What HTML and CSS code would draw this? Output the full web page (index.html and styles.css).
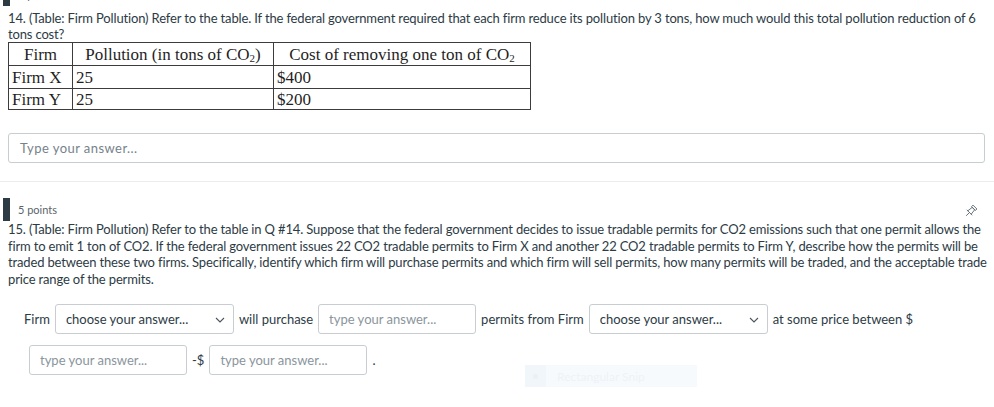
FILE: index.html
```html
<!DOCTYPE html>
<html>
<head>
<meta charset="utf-8">
<link rel="stylesheet" href="styles.css">
</head>
<body>
<div class="quiz">
  <section class="question q14">
    <div class="q-header first">
      <span class="q-bar"></span>
      <span class="q-points">1 point</span>
    </div>
    <div class="q-text first-text">14. (Table: Firm Pollution) Refer to the table. If the federal government required that each firm reduce its pollution by 3 tons, how much would this total pollution reduction of 6 tons cost?</div>
    <table class="firm-table">
      <tr class="head">
        <td class="c1 center">Firm</td>
        <td class="c2 center">Pollution (in tons of CO<sub>2</sub>)</td>
        <td class="c3 center">Cost of removing one ton of CO<sub>2</sub></td>
      </tr>
      <tr>
        <td class="c1">Firm X</td>
        <td class="c2">25</td>
        <td class="c3">$400</td>
      </tr>
      <tr class="last">
        <td class="c1">Firm Y</td>
        <td class="c2">25</td>
        <td class="c3">$200</td>
      </tr>
    </table>
    <div class="answer-box">Type your answer...</div>
  </section>

  <hr class="separator">

  <section class="question q15">
    <div class="q-header">
      <span class="q-bar"></span>
      <span class="q-points">5 points</span>
      <svg class="pin" viewBox="0 0 14 16" width="12" height="14">
        <g transform="rotate(45 7 8)" fill="none" stroke="#5b6770" stroke-width="1" stroke-linejoin="round">
          <path d="M7 10.5 L7 16"/>
          <path d="M2.5 10.5 L11.5 10.5"/>
          <path d="M4.2 10.5 L5 4 L9 4 L9.8 10.5"/>
          <path d="M3.8 4 L10.2 4 L10.2 1.5 L3.8 1.5 Z"/>
        </g>
      </svg>
    </div>
    <div class="q-text wide">15. (Table: Firm Pollution) Refer to the table in Q #14. Suppose that the federal government decides to issue tradable permits for CO2 emissions such that one permit allows the firm to emit 1 ton of CO2. If the federal government issues 22 CO2 tradable permits to Firm X and another 22 CO2 tradable permits to Firm Y, describe how the permits will be traded between these two firms. Specifically, identify which firm will purchase permits and which firm will sell permits, how many permits will be traded, and the acceptable trade price range of the permits.</div>

    <div class="fill-row">
      <span class="lbl">Firm</span>
      <span class="select">choose your answer...<svg class="chev" viewBox="0 0 10 6" width="10" height="6"><path d="M1 1 L5 5 L9 1" fill="none" stroke="#4a555d" stroke-width="1.1"/></svg></span>
      <span class="lbl">will purchase</span>
      <span class="blank">type your answer...</span>
      <span class="lbl">permits from Firm</span>
      <span class="select">choose your answer...<svg class="chev" viewBox="0 0 10 6" width="10" height="6"><path d="M1 1 L5 5 L9 1" fill="none" stroke="#4a555d" stroke-width="1.1"/></svg></span>
      <span class="lbl">at some price between $</span>
      <span class="blank">type your answer...</span>
      <span class="lbl">-$</span>
      <span class="blank">type your answer...</span>
      <span class="lbl">.</span>
    </div>
  </section>

  <div class="snip">
    <span class="snip-icon"><span class="snip-dot"></span></span>
    <span class="snip-text">Rectangular Snip</span>
  </div>
</div>
</body>
</html>
```

FILE: styles.css
```css
html, body {
  margin: 0;
  padding: 0;
  background: #ffffff;
}

body {
  font-family: Lato, "Open Sans", sans-serif;
  color: #2d3b45;
  overflow: hidden;
}

.quiz {
  position: relative;
  width: 994px;
  height: 407px;
  overflow: hidden;
}

.question {
  padding: 0 9px 0 8px;
}

.q-header {
  display: flex;
  align-items: center;
  height: 23px;
}

.q-header.first {
  margin-top: -17px;
}

.q15 .q-header {
  margin-top: 16px;
}

.q-bar {
  width: 7px;
  height: 23px;
  background: #2d3b45;
  margin-left: -5px;
}

.q-points {
  margin-left: 8px;
  font-size: 11px;
  color: #59646c;
}

.pin {
  margin-left: auto;
  margin-right: 8px;
  margin-top: 2px;
}

.q-text {
  font-size: 13px;
  line-height: 16.5px;
  letter-spacing: -0.15px;
  color: #2d3b45;
}

.q-text.wide {
  margin-right: -8px;
}

.q-text.first-text {
  margin-top: 4px;
  line-height: 16px;
}

.firm-table {
  border-collapse: collapse;
  font-family: "Liberation Serif", "Times New Roman", serif;
  font-size: 17px;
  color: #1f1f1f;
  border: 1.5px solid #3c3c3c;
}

.firm-table td {
  border: 1px solid #3c3c3c;
  padding: 0 3px;
  height: 22px;
  line-height: 19px;
  text-align: left;
  vertical-align: middle;
}

.firm-table tr.last td {
  height: 20px;
}

.firm-table td.center {
  text-align: center;
}

.firm-table .c1 { width: 57px; }
.firm-table .c2 { width: 194px; }
.firm-table .c3 { width: 250px; }

.firm-table sub {
  font-size: 11px;
  vertical-align: -2px;
  line-height: 0;
}

.answer-box {
  margin-top: 23px;
  height: 28px;
  border: 1px solid #c7cdd1;
  border-radius: 3px;
  padding-left: 11px;
  font-size: 13px;
  letter-spacing: 0.45px;
  line-height: 28px;
  color: #76828b;
}

.separator {
  margin: 18px 0 0 0;
  border: none;
  border-top: 1px solid #ececec;
  height: 0;
}

.fill-row {
  display: flex;
  flex-wrap: wrap;
  align-items: center;
  row-gap: 11px;
  margin-top: 17px;
  padding-left: 16px;
  font-size: 13px;
}

.lbl {
  color: #2d3b45;
  line-height: 30px;
}

.select, .blank {
  box-sizing: border-box;
  height: 30px;
  border: 1px solid #c7cdd1;
  border-radius: 3px;
  margin: 0 5px;
  padding-left: 10px;
  display: flex;
  align-items: center;
  font-size: 13px;
}

.select {
  width: 179px;
  color: #2d3b45;
  position: relative;
}

.chev {
  position: absolute;
  right: 8px;
  top: 12px;
}

.blank {
  width: 158px;
  color: #8a959d;
}

.snip {
  position: absolute;
  left: 525px;
  top: 365px;
  width: 172px;
  height: 22px;
  background: #f7fafd;
  display: flex;
  align-items: center;
}

.snip-icon {
  width: 21px;
  height: 22px;
  background: #f1f6fb;
  display: flex;
  align-items: center;
  justify-content: center;
}

.snip-dot {
  width: 5px;
  height: 5px;
  border-radius: 50%;
  background: #eceff3;
}

.snip-text {
  margin-left: 11px;
  font-size: 12px;
  color: #eef2f6;
}
```
